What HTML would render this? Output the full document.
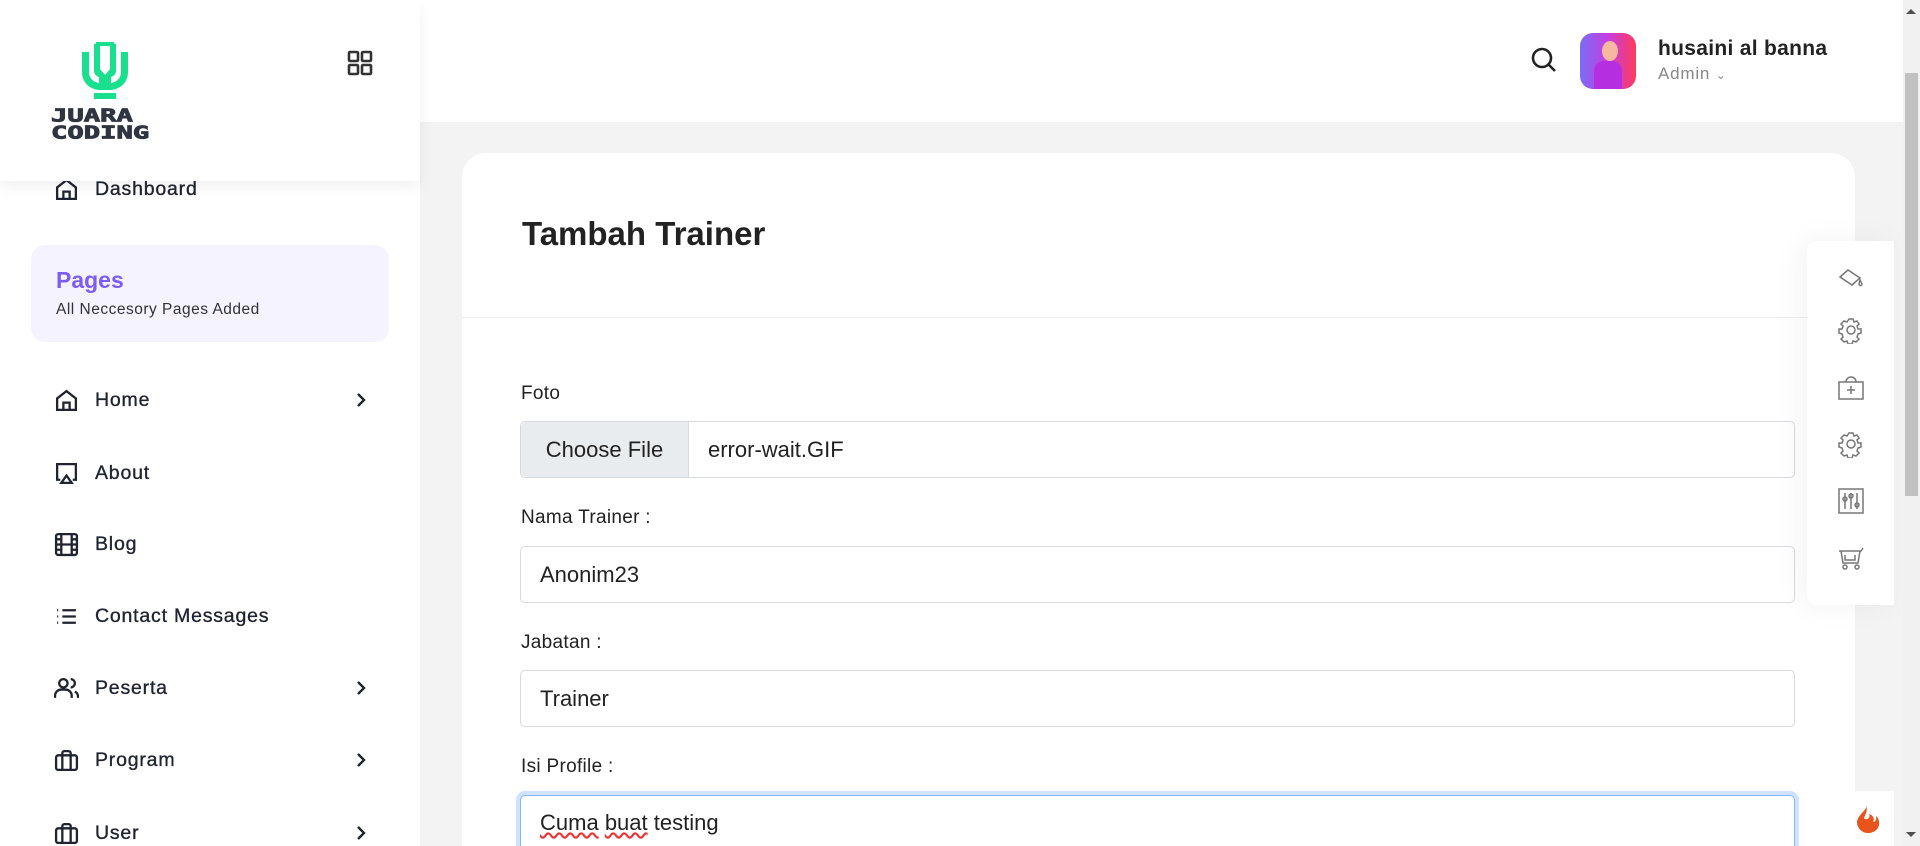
<!DOCTYPE html>
<html><head><meta charset="utf-8"><style>
*{box-sizing:border-box;margin:0;padding:0}
html{width:1920px;height:846px;overflow:hidden}
body{width:1920px;height:846px;overflow:hidden;background:#f3f3f3;font-family:"Liberation Sans",sans-serif;position:relative;color:#222}
.sidebar{position:absolute;left:0;top:0;width:420px;height:846px;background:#fff}
.sbhead{position:absolute;left:0;top:0;width:420px;height:181px;background:#fff;box-shadow:0 6px 14px rgba(0,0,0,.06);z-index:2}
.item{position:absolute;left:54px;height:30px;display:flex;align-items:center;font-size:19.5px;letter-spacing:.8px;color:#1f2430;-webkit-text-stroke:.35px #1f2430}
.item svg{width:25px;height:25px;margin-right:16px;fill:none;stroke:#1f2430;stroke-width:2.2;-webkit-text-stroke:0}
.chev{position:absolute;left:354px;width:14px;height:14px;fill:none;stroke:#1f2430;stroke-width:2.4}
.header{position:absolute;left:420px;top:0;width:1483px;height:122px;background:#fff}
.card{position:absolute;left:462px;top:153px;width:1393px;height:693px;background:#fff;border-radius:24px 24px 0 0}
.lbl{position:absolute;left:521px;font-size:19px;color:#222;letter-spacing:.3px}
.inp{position:absolute;left:520px;width:1275px;height:57px;border:1px solid #d6d9dd;border-radius:5px;background:#fff;font-size:22px;padding-left:19px;display:flex;align-items:center;color:#222}
.panel{position:absolute;left:1807px;top:241px;width:87px;height:364px;background:#fff;border-radius:10px 0 0 10px;box-shadow:-6px 0 30px rgba(0,0,0,.05)}
.panel svg{position:absolute;left:30px;width:28px;height:28px;fill:none;stroke:#777;stroke-width:1.5}
</style></head><body>
<div class="sidebar">
 <div class="sbhead">
  <svg style="position:absolute;left:80px;top:42px" width="50" height="57" viewBox="0 0 50 57">
   <path d="M2 10h7v20c0 6 4 10 10 11v-6c-3-1-5-3-5-7V2h22v26c0 4-2 6-5 7v6c6-1 10-5 10-11V10h7v20c0 10-7 17-17 18h-12C9 47 2 40 2 30z" fill="#18e08e"/>
   <path d="M18 2h14v26l-7 8-7-8z" fill="#fff" stroke="#18e08e" stroke-width="4"/>
   <rect x="14" y="51" width="22" height="6" fill="#18e08e"/>
  </svg>
  <div style="position:absolute;left:51px;top:108px;font:bold 17px/16px 'DejaVu Sans Mono','Liberation Mono',monospace;color:#2f3540;letter-spacing:0;transform:scale(1.6,1.05);transform-origin:left top;-webkit-text-stroke:.8px #2f3540">JUARA<br>CODING</div>
  <svg style="position:absolute;left:347px;top:50px" width="26" height="26" viewBox="0 0 26 26" fill="none" stroke="#333" stroke-width="2.6"><rect x="2" y="2" width="9" height="9" rx="1"/><rect x="15" y="2" width="9" height="9" rx="1"/><rect x="2" y="15" width="9" height="9" rx="1"/><rect x="15" y="15" width="9" height="9" rx="1"/></svg>
 </div>
 <div class="item" style="top:174px;z-index:1"><svg viewBox="0 0 24 24"><path d="M3 10l9-7 9 7v11H3z M9 21v-7h6v7"/></svg>Dashboard</div>
 <div style="position:absolute;left:31px;top:245px;width:358px;height:97px;background:#f5f3ff;border-radius:14px">
  <div style="position:absolute;left:25px;top:22px;font-size:23px;font-weight:bold;color:#7b5cf5">Pages</div>
  <div style="position:absolute;left:25px;top:56px;font-size:15.5px;color:#333;letter-spacing:.5px">All Neccesory Pages Added</div>
 </div>
 <div class="item" style="top:385px"><svg viewBox="0 0 24 24"><path d="M3 10l9-7 9 7v11H3z M9 21v-7h6v7"/></svg>Home</div>
 <svg class="chev" style="top:393px" viewBox="0 0 14 14"><path d="M4 1l6 6-6 6"/></svg>
 <div class="item" style="top:458px"><svg viewBox="0 0 24 24"><path d="M6 18H3V3h18v15h-3 M12 14l5 7H7z"/></svg>About</div>
 <div class="item" style="top:529px"><svg viewBox="0 0 24 24"><rect x="2" y="2" width="20" height="20" rx="2"/><path d="M7 2v20M17 2v20M2 12h20M2 7h5M2 17h5M17 7h5M17 17h5"/></svg>Blog</div>
 <div class="item" style="top:601px"><svg viewBox="0 0 24 24"><path d="M8 6h13M8 12h13M8 18h13M3 6h1M3 12h1M3 18h1"/></svg>Contact Messages</div>
 <div class="item" style="top:673px"><svg viewBox="0 0 24 24"><circle cx="9" cy="7" r="4"/><path d="M1 21v-2a6 6 0 0 1 6-6h4a6 6 0 0 1 6 6v2M16 3a4 4 0 0 1 0 8M23 21v-2a5 5 0 0 0-3-4"/></svg>Peserta</div>
 <svg class="chev" style="top:681px" viewBox="0 0 14 14"><path d="M4 1l6 6-6 6"/></svg>
 <div class="item" style="top:745px"><svg viewBox="0 0 24 24"><rect x="2" y="7" width="20" height="14" rx="2"/><path d="M16 21V5a2 2 0 0 0-2-2h-4a2 2 0 0 0-2 2v16"/></svg>Program</div>
 <svg class="chev" style="top:753px" viewBox="0 0 14 14"><path d="M4 1l6 6-6 6"/></svg>
 <div class="item" style="top:818px"><svg viewBox="0 0 24 24"><rect x="2" y="7" width="20" height="14" rx="2"/><path d="M16 21V5a2 2 0 0 0-2-2h-4a2 2 0 0 0-2 2v16"/></svg>User</div>
 <svg class="chev" style="top:826px" viewBox="0 0 14 14"><path d="M4 1l6 6-6 6"/></svg>
</div>
<div class="header">
 <svg style="position:absolute;left:1110px;top:46px" width="28" height="28" viewBox="0 0 28 28" fill="none" stroke="#222" stroke-width="2.6"><circle cx="12" cy="12" r="9"/><path d="M19 19l6 6"/></svg>
 <div style="position:absolute;left:1160px;top:33px;width:56px;height:56px;border-radius:13px;background:linear-gradient(90deg,#7b6cf6,#c63ee0 50%,#ff3b5c);overflow:hidden">
  <div style="position:absolute;left:22px;top:8px;width:16px;height:20px;border-radius:50%;background:#f7b8a0"></div>
  <div style="position:absolute;left:14px;top:28px;width:28px;height:30px;border-radius:10px 10px 0 0;background:#b52ee0"></div>
 </div>
 <div style="position:absolute;left:1238px;top:37px;font-size:21px;font-weight:bold;color:#222;letter-spacing:.3px">husaini al banna</div>
 <div style="position:absolute;left:1238px;top:64px;font-size:17px;color:#888;letter-spacing:.8px">Admin <span style="font-size:12px">&#8964;</span></div>
</div>
<div class="card">
 <div style="position:absolute;left:60px;top:62px;font-size:33px;font-weight:bold;color:#222">Tambah Trainer</div>
 <div style="position:absolute;left:0;top:164px;width:1393px;height:1px;background:#eef0f2"></div>
</div>
<div class="lbl" style="top:383px">Foto</div>
<div class="inp" style="top:421px;padding-left:0"><div style="width:168px;height:100%;background:#e9ecef;border-right:1px solid #d6d9dd;display:flex;align-items:center;justify-content:center;border-radius:5px 0 0 5px">Choose File</div><span style="margin-left:19px">error-wait.GIF</span></div>
<div class="lbl" style="top:507px">Nama Trainer :</div>
<div class="inp" style="top:546px">Anonim23</div>
<div class="lbl" style="top:632px">Jabatan :</div>
<div class="inp" style="top:670px">Trainer</div>
<div class="lbl" style="top:756px">Isi Profile :</div>
<div class="inp" style="top:795px;height:80px;align-items:flex-start;padding-top:14px;border-color:#86b7fe;box-shadow:0 0 0 4px rgba(13,110,253,.2)"><span style="text-decoration:underline wavy #e33;text-decoration-skip-ink:none">Cuma</span>&nbsp;<span style="text-decoration:underline wavy #e33">buat</span>&nbsp;testing</div>
<div class="panel">
 <svg style="top:25px" viewBox="0 0 28 28"><path d="M3 11l8-7 12 8-8 7z M3 11l12 8 M23 14l2 4a1.5 1.5 0 1 1-3 0z"/></svg>
 <svg style="top:75px" viewBox="0 0 28 28"><circle cx="14" cy="14" r="4"/><path d="M12 3h4l1 3 3-1 2 3-2 2 1 3h3v4l-3 1-1 3 2 2-3 3-3-1-1 3h-4l-1-3-3 1-3-3 2-2-1-3-3-1v-4h3l1-3-2-2 3-3 3 1z"/></svg>
 <svg style="top:133px" viewBox="0 0 28 28"><rect x="2" y="8" width="24" height="17"/><path d="M9 8a5 5 0 0 1 10 0 M10 16h8M14 12v8"/></svg>
 <svg style="top:189px" viewBox="0 0 28 28"><circle cx="14" cy="14" r="4"/><path d="M12 3h4l1 3 3-1 2 3-2 2 1 3h3v4l-3 1-1 3 2 2-3 3-3-1-1 3h-4l-1-3-3 1-3-3 2-2-1-3-3-1v-4h3l1-3-2-2 3-3 3 1z"/></svg>
 <svg style="top:246px" viewBox="0 0 28 28"><rect x="2" y="2" width="24" height="24"/><path d="M8 6v16M14 6v16M20 6v16"/><circle cx="8" cy="12" r="2"/><circle cx="14" cy="9" r="2"/><circle cx="20" cy="18" r="2"/></svg>
 <svg style="top:303px" viewBox="0 0 28 28"><path d="M2 7h22l2-3 M4 7l2 12h15l2-12 M8 11v5h10v-5"/><circle cx="8" cy="23" r="2"/><circle cx="20" cy="23" r="2"/></svg>
</div>
<div style="position:absolute;left:1840px;top:791px;width:54px;height:55px;background:#fff">
 <svg style="position:absolute;left:14px;top:13px" width="28" height="30" viewBox="0 0 28 30"><path d="M12 1c2 5-8 9-9 17 0 6 5 11 11 11s12-4 11-11c0-4-3-6-3-6 1 4-1 6-3 6 2-3 0-7-4-8 2 4-2 6-4 5-3-1 4-6 1-14z" fill="#e9541d"/></svg>
</div>
<div style="position:absolute;left:1903px;top:0;width:17px;height:846px;background:#f1f1f1">
 <div style="position:absolute;left:0;top:4px;width:0;height:0;border:5px solid transparent;border-bottom-color:#505050;margin-left:3px"></div>
 <div style="position:absolute;left:2px;top:73px;width:13px;height:423px;background:#c1c1c1"></div>
 <div style="position:absolute;left:3px;top:832px;width:0;height:0;border:5px solid transparent;border-top-color:#505050"></div>
</div>
</body></html>
